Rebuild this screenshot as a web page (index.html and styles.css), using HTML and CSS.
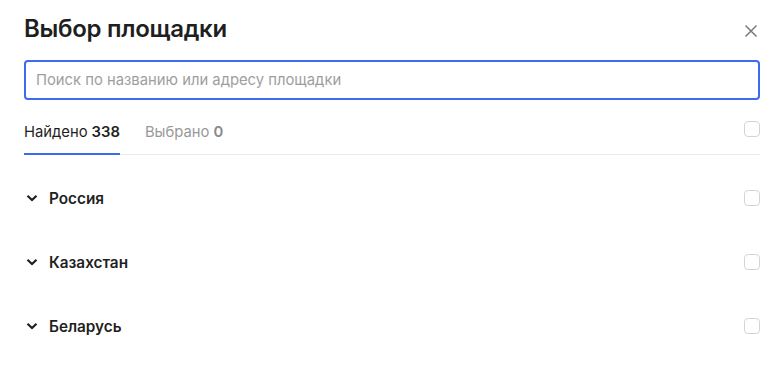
FILE: index.html
```html
<!DOCTYPE html>
<html lang="ru">
<head>
<meta charset="utf-8">
<link rel="stylesheet" href="styles.css">
</head>
<body>
<div class="modal">
  <div class="header">
    <h1 class="title">Выбор площадки</h1>
    <button class="close" aria-label="Закрыть">
      <svg width="14" height="14" viewBox="0 0 14 14"><path d="M1.5 1.5 L12.5 12.5 M12.5 1.5 L1.5 12.5" stroke="#7a7a7a" stroke-width="1.5" fill="none"/></svg>
    </button>
  </div>
  <div class="search">
    <input class="search-input" type="text" placeholder="Поиск по названию или адресу площадки">
  </div>
  <div class="tabs">
    <div class="tab tab-active">Найдено <b>338</b></div>
    <div class="tab">Выбрано <b>0</b></div>
    <span class="checkbox tabs-check"></span>
  </div>
  <ul class="list">
    <li class="row">
      <span class="chev"><svg width="12" height="8" viewBox="0 0 12 8"><path d="M1.5 1.8 L6 6 L10.5 1.8" stroke="#1f1f1f" stroke-width="2.2" fill="none"/></svg></span>
      <span class="name">Россия</span>
      <span class="checkbox"></span>
    </li>
    <li class="row">
      <span class="chev"><svg width="12" height="8" viewBox="0 0 12 8"><path d="M1.5 1.8 L6 6 L10.5 1.8" stroke="#1f1f1f" stroke-width="2.2" fill="none"/></svg></span>
      <span class="name">Казахстан</span>
      <span class="checkbox"></span>
    </li>
    <li class="row">
      <span class="chev"><svg width="12" height="8" viewBox="0 0 12 8"><path d="M1.5 1.8 L6 6 L10.5 1.8" stroke="#1f1f1f" stroke-width="2.2" fill="none"/></svg></span>
      <span class="name">Беларусь</span>
      <span class="checkbox"></span>
    </li>
  </ul>
</div>
</body>
</html>
```
FILE: styles.css
```css
* { box-sizing: border-box; }
html, body { margin: 0; padding: 0; background: #fff; }
body { font-family: Inter, "Noto Sans", sans-serif; color: #1f1f1f; }
.modal { padding: 12px 20px 0 24px; }
.header { display: flex; align-items: center; justify-content: space-between; height: 34px; }
.title { margin: 0; font-size: 24px; font-weight: 600; line-height: 32px; letter-spacing: -0.3px; color: #1f1f1f; }
.close { border: 0; background: none; padding: 0; width: 14px; height: 14px; margin-right: 2px; margin-top: 4px; display: flex; cursor: pointer; }
.search { margin-top: 14px; }
.search-input { width: 100%; height: 40px; border: 2px solid #3a6cf0; border-radius: 4px; padding: 0 10px; font-family: inherit; font-size: 14.8px; color: #1f1f1f; outline: none; }
.search-input::placeholder { color: #9e9e9e; }
.tabs { display: flex; align-items: stretch; gap: 25px; margin-top: 10px; border-bottom: 1px solid #e9e9e9; height: 45px; position: relative; }
.tab { display: flex; align-items: center; padding-top: 1px; font-size: 14.8px; color: #999; border-bottom: 2px solid transparent; margin-bottom: -1px; }
.tab b { font-weight: 600; margin-left: 4px; color: #8a8a8a; }
.tab-active { color: #1f1f1f; border-bottom-color: #3a6cf0; }
.tab-active b { color: #1f1f1f; }
.tabs-check { margin-left: auto; align-self: center; margin-top: -6px; }
.checkbox { width: 16px; height: 16px; border: 1px solid #d4d4d4; border-radius: 4px; flex: none; background: #fff; }
.list { list-style: none; margin: 11px 0 0; padding: 0; }
.row { display: flex; align-items: center; height: 64px; }
.chev { width: 12px; display: flex; margin-left: 2px; margin-right: 11px; }
.name { font-size: 15.3px; font-weight: 600; flex: 1; }
```
